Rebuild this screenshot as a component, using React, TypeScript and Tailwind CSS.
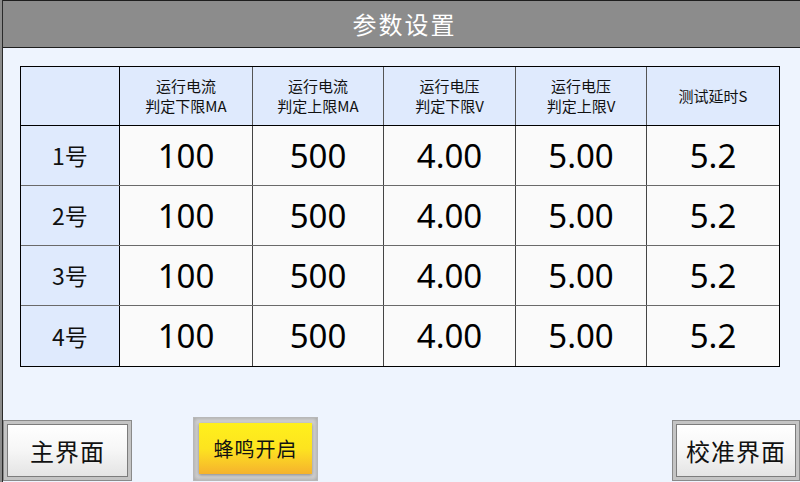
import React from "react";

const heads: string[][] = [
  ["运行电流", "判定下限MA"],
  ["运行电流", "判定上限MA"],
  ["运行电压", "判定下限V"],
  ["运行电压", "判定上限V"],
  ["测试延时S"],
];

const rows = [
  ["1号", "100", "500", "4.00", "5.00", "5.2"],
  ["2号", "100", "500", "4.00", "5.00", "5.2"],
  ["3号", "100", "500", "4.00", "5.00", "5.2"],
  ["4号", "100", "500", "4.00", "5.00", "5.2"],
];

const colW = ["w-[99px]", "w-[133px]", "w-[131px]", "w-[132px]", "w-[131px]", "w-[132px]"];

function GrayButton({ label, w }: { label: string; w: string }) {
  return (
    <div className={`${w} h-[61px] border border-[#8a8a8a] bg-[#c4c4c4] p-[3px]`}>
      <div className="h-full w-full border border-[#7c7c7c] bg-gradient-to-b from-[#ffffff] via-[#f6f6f6] to-[#e4e4e4] flex items-center justify-center text-[24px] text-[#111] tracking-[1px]">
        {label}
      </div>
    </div>
  );
}

export default function App() {
  return (
    <div
      className="w-[800px] h-[482px] flex overflow-hidden bg-[#eef4fe]"
      style={{ fontFamily: '"Noto Sans CJK SC", "Noto Sans", sans-serif' }}
    >
      <div className="w-[2px] h-full bg-[#8c8c8c]" />
      <div className="w-px h-full bg-[#2a2a2a]" />
      <div className="flex-1 flex flex-col">
        <div className="h-[48px] shrink-0 bg-[#8c8c8c] border-t border-b border-[#1e1e1e] flex items-center justify-center text-white text-[24px] tracking-[2px] pl-[6px]">
          参数设置
        </div>
        <div className="flex-1 flex flex-col">
          <div className="pl-[17px] pt-[18px]">
            <div className="inline-flex flex-col border border-black">
              <div className="flex h-[59px] border-b border-black">
                <div className={`${colW[0]} shrink-0 bg-[#dfeafd] border-r border-black`} />
                {heads.map((h, i) => (
                  <div
                    key={i}
                    className={`${colW[i + 1]} shrink-0 bg-[#dfeafd] flex flex-col items-center justify-center text-[15px] leading-[20px] text-[#111] ${i < 4 ? "border-r border-[#555]" : ""}`}
                  >
                    {h.map((t, j) => (
                      <span key={j}>{t}</span>
                    ))}
                  </div>
                ))}
              </div>
              {rows.map((r, ri) => (
                <div
                  key={ri}
                  className={`flex h-[60px] ${ri < 3 ? "border-b border-[#6a6a6a]" : ""}`}
                >
                  <div className={`${colW[0]} shrink-0 bg-[#dfeafd] border-r border-black flex items-center justify-center text-[23px] text-[#111]`}>
                    {r[0]}
                  </div>
                  {r.slice(1).map((v, ci) => (
                    <div
                      key={ci}
                      className={`${colW[ci + 1]} shrink-0 bg-[#fafafa] flex items-center justify-center text-[33px] text-black font-normal ${ci < 4 ? "border-r border-[#444]" : ""}`}
                      style={{ fontFamily: '"Noto Sans", "Open Sans", sans-serif' }}
                    >
                      {v}
                    </div>
                  ))}
                </div>
              ))}
            </div>
          </div>
          <div className="mt-auto flex items-end pb-[1px]">
            <GrayButton label="主界面" w="w-[129px]" />
            <div className="ml-[61px] w-[125px] h-[64px] border border-[#b8b8b8] bg-[#d2d2d2] px-[5px] pt-[5px] pb-[6px] shadow-[inset_0_0_4px_rgba(0,0,0,0.25)]">
              <div className="h-full w-full bg-gradient-to-b from-[#fff01c] via-[#fde41f] to-[#f5b22c] shadow-[0_1px_3px_rgba(0,0,0,0.35)] flex items-center justify-center text-[20px] text-[#111] tracking-[1px]">
                蜂鸣开启
              </div>
            </div>
            <div className="ml-auto">
              <GrayButton label="校准界面" w="w-[128px]" />
            </div>
          </div>
        </div>
      </div>
    </div>
  );
}
